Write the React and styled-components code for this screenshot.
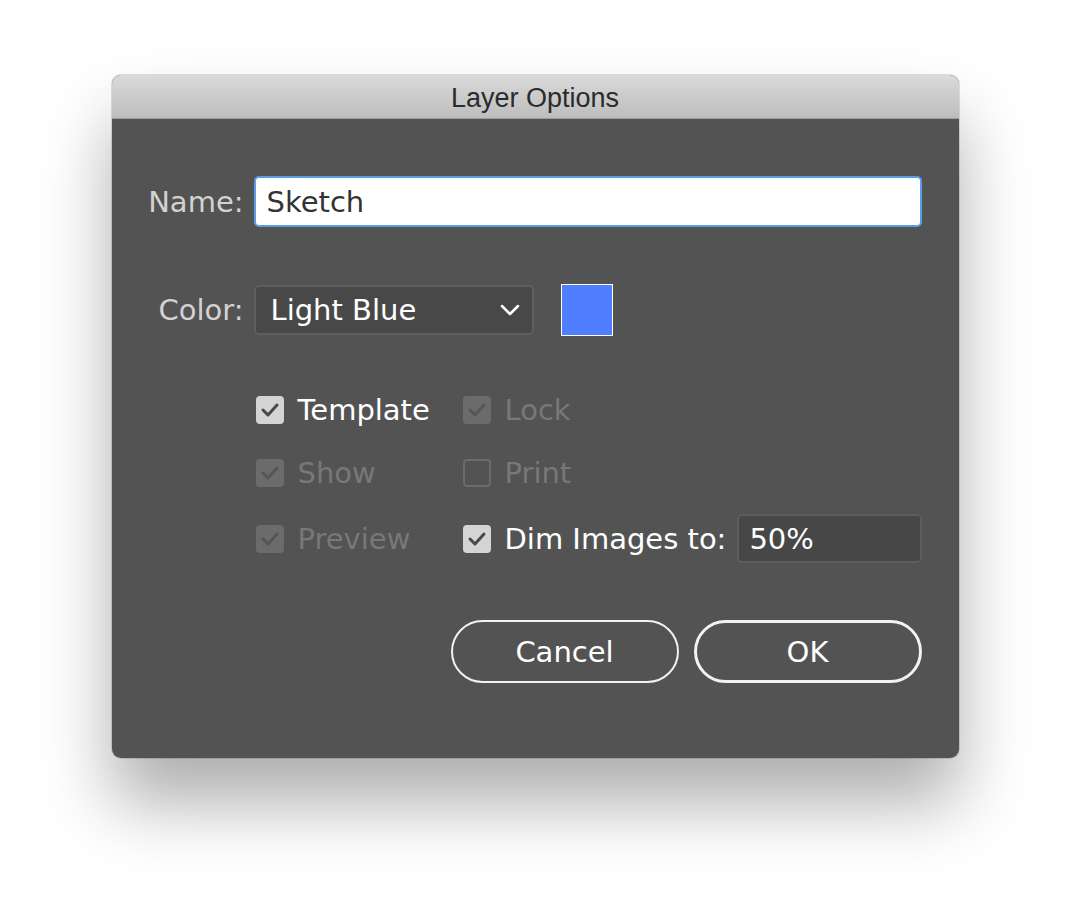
import React from "react";
import styled, { createGlobalStyle } from "styled-components";

const GlobalStyle = createGlobalStyle`
  html, body {
    margin: 0;
    padding: 0;
    background: #ffffff;
  }
  body {
    font-family: "DejaVu Sans", "Noto Sans", sans-serif;
  }
`;

const Page = styled.div`
  width: 1070px;
  height: 904px;
  display: flex;
  justify-content: center;
  align-items: flex-start;
  padding-top: 75px;
  box-sizing: border-box;
  overflow: hidden;
`;

const Window = styled.div`
  width: 847px;
  border-radius: 9px;
  background: #535353;
  box-shadow: 0 45px 70px rgba(0, 0, 0, 0.32), 0 0 0 1px rgba(0, 0, 0, 0.12);
  overflow: hidden;
`;

const TitleBar = styled.div`
  height: 44px;
  display: flex;
  align-items: center;
  justify-content: center;
  background: linear-gradient(#dadada, #bdbdbd);
  border-bottom: 1px solid #9c9c9c;
  box-sizing: border-box;
  font-family: "Liberation Sans", Arial, sans-serif;
  font-size: 27px;
  color: #2b2b2b;
  padding-top: 3px;
`;

const Body = styled.div`
  padding: 57px 37px 75px 0;
  display: flex;
  flex-direction: column;
`;

const Row = styled.div`
  display: flex;
  align-items: center;
  gap: 10px;
  margin-bottom: ${(p) => p.$mb || 0}px;
`;

const Label = styled.label`
  width: 132px;
  text-align: right;
  font-size: 29px;
  color: #d2d2d2;
  flex-shrink: 0;
`;

const TextInput = styled.div`
  flex: 1;
  height: 51px;
  box-sizing: border-box;
  background: #ffffff;
  border: 2px solid #5b9de4;
  border-radius: 5px;
  display: flex;
  align-items: center;
  padding-left: 11px;
  font-size: 29px;
  color: #333333;
`;

const Select = styled.div`
  width: 280px;
  height: 50px;
  box-sizing: border-box;
  background: #484848;
  border: 2px solid #5e5e5e;
  border-radius: 5px;
  display: flex;
  align-items: center;
  justify-content: space-between;
  padding: 0 12px 0 15px;
  font-size: 29px;
  color: #ffffff;
`;

const Swatch = styled.div`
  width: 52px;
  height: 52px;
  box-sizing: border-box;
  background: #4f7ffe;
  border: 1px solid #ffffff;
  margin-left: 17px;
`;

const OptionsGrid = styled.div`
  display: grid;
  grid-template-columns: 207px auto;
  grid-template-rows: 44px 44px 49px;
  row-gap: 19px;
  margin-left: 144px;
  margin-bottom: 57px;
`;

const Option = styled.div`
  display: flex;
  align-items: center;
  gap: 14px;
  font-size: 29px;
  color: ${(p) => (p.$disabled ? "#787878" : "#ffffff")};
  white-space: nowrap;
`;

const Box = styled.span`
  width: 28px;
  height: 28px;
  box-sizing: border-box;
  border-radius: 4px;
  flex-shrink: 0;
  display: flex;
  align-items: center;
  justify-content: center;
  background: ${(p) =>
    !p.$checked ? "transparent" : p.$disabled ? "#6b6b6b" : "#d4d4d4"};
  border: ${(p) => (p.$checked ? "none" : "2px solid #6b6b6b")};
`;

const SmallInput = styled.div`
  width: 185px;
  height: 49px;
  box-sizing: border-box;
  background: #474747;
  border: 2px solid #5d5d5d;
  border-radius: 5px;
  display: flex;
  align-items: center;
  padding-left: 10px;
  margin-left: -3px;
  font-size: 29px;
  color: #ffffff;
`;

const Buttons = styled.div`
  display: flex;
  justify-content: flex-end;
  gap: 15px;
`;

const Button = styled.button`
  width: 228px;
  height: 63px;
  box-sizing: border-box;
  border-radius: 32px;
  background: transparent;
  border: ${(p) => (p.$primary ? "3px" : "2px")} solid #f2f2f2;
  color: #ffffff;
  font-family: "DejaVu Sans", "Noto Sans", sans-serif;
  font-size: 29px;
  padding: 0;
  cursor: pointer;
`;

const Check = ({ disabled }) => (
  <svg width="20" height="18" viewBox="0 0 20 18">
    <polyline
      points="3,9 8,14 17,4"
      fill="none"
      stroke={disabled ? "#555555" : "#484848"}
      strokeWidth="3"
      strokeLinecap="round"
      strokeLinejoin="round"
    />
  </svg>
);

const Checkbox = ({ label, checked, disabled, children }) => (
  <Option $disabled={disabled}>
    <Box $checked={checked} $disabled={disabled}>
      {checked && <Check disabled={disabled} />}
    </Box>
    <span>{label}</span>
    {children}
  </Option>
);

const Chevron = () => (
  <svg width="20" height="12" viewBox="0 0 20 12">
    <polyline
      points="2,2 10,10 18,2"
      fill="none"
      stroke="#ffffff"
      strokeWidth="2.5"
      strokeLinecap="round"
      strokeLinejoin="round"
    />
  </svg>
);

export default function App() {
  return (
    <>
      <GlobalStyle />
      <Page>
        <Window>
          <TitleBar>Layer Options</TitleBar>
          <Body>
            <Row $mb={57}>
              <Label>Name:</Label>
              <TextInput>Sketch</TextInput>
            </Row>
            <Row $mb={52}>
              <Label>Color:</Label>
              <Select>
                <span>Light Blue</span>
                <Chevron />
              </Select>
              <Swatch />
            </Row>
            <OptionsGrid>
              <Checkbox label="Template" checked />
              <Checkbox label="Lock" checked disabled />
              <Checkbox label="Show" checked disabled />
              <Checkbox label="Print" disabled />
              <Checkbox label="Preview" checked disabled />
              <Checkbox label="Dim Images to:" checked>
                <SmallInput>50%</SmallInput>
              </Checkbox>
            </OptionsGrid>
            <Buttons>
              <Button>Cancel</Button>
              <Button $primary>OK</Button>
            </Buttons>
          </Body>
        </Window>
      </Page>
    </>
  );
}
